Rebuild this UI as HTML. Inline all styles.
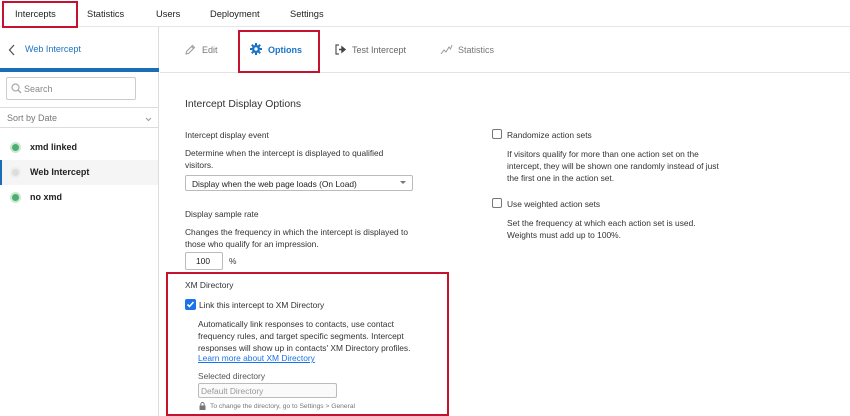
<!DOCTYPE html>
<html><head><meta charset="utf-8"><style>
*{box-sizing:border-box;margin:0;padding:0}
body{width:850px;height:416px;overflow:hidden;font-family:"Liberation Sans",sans-serif;color:#333;background:#fff;position:relative;font-size:8.4px}
.a{position:absolute}
.nav{top:0;left:0;width:850px;height:27px;border-bottom:1px solid #e6e6e6;background:#fff}
.nav span{position:absolute;top:9px;font-size:9.3px;color:#222}
.red{border:2px solid #c4122f}
.side{top:27px;left:0;width:159px;height:389px;border-right:1px solid #ddd}
.t{font-size:8.4px;color:#333}
.chk{width:10px;height:10px;border:1px solid #777;border-radius:2px;background:#fff}
</style></head><body>
<div class="a nav">
<span style="left:15px">Intercepts</span>
<span style="left:87px">Statistics</span>
<span style="left:156px">Users</span>
<span style="left:210px">Deployment</span>
<span style="left:290px">Settings</span>
</div>
<div class="a red" style="left:2px;top:1px;width:76px;height:27px"></div>

<div class="a side">
 <svg class="a" style="left:8px;top:17px" width="8" height="12" viewBox="0 0 8 12"><path d="M6 1L1.5 6L6 11" stroke="#555" stroke-width="1.3" fill="none"/></svg>
 <div class="a" style="left:25px;top:17px;font-size:9px;color:#1a73c7">Web Intercept</div>
 <div class="a" style="left:0;top:41px;width:159px;height:4px;background:#1a6eb5"></div>
 <div class="a" style="left:6px;top:50px;width:130px;height:23px;border:1px solid #ccc;border-radius:2px"></div>
 <svg class="a" style="left:11px;top:56px" width="11" height="11" viewBox="0 0 11 11"><circle cx="4.5" cy="4.5" r="3.5" stroke="#aaa" fill="none" stroke-width="1.2"/><path d="M7 7L10 10" stroke="#aaa" stroke-width="1.4"/></svg>
 <div class="a" style="left:24px;top:57px;font-size:9px;color:#888">Search</div>
 <div class="a" style="left:0;top:80px;width:159px;height:21px;border-top:1px solid #ddd;border-bottom:1px solid #ddd"></div>
 <div class="a" style="left:7px;top:86px;font-size:9px;color:#777">Sort by Date</div>
 <svg class="a" style="left:145px;top:90px" width="7" height="5" viewBox="0 0 7 5"><path d="M1 1L3.5 3.5L6 1" stroke="#999" fill="none"/></svg>
 <div class="a" style="left:12px;top:117px;width:7px;height:7px;border-radius:50%;background:#4caf6e;box-shadow:0 0 0 2px #cbe8d4"></div>
 <div class="a" style="left:30px;top:115px;font-size:9px;font-weight:bold;color:#222">xmd linked</div>
 <div class="a" style="left:0;top:133px;width:158px;height:25px;background:#f5f5f5"></div>
 <div class="a" style="left:0;top:133px;width:2px;height:25px;background:#1a6eb5"></div>
 <div class="a" style="left:12px;top:142px;width:7px;height:7px;border-radius:50%;background:#ddd;box-shadow:0 0 0 2px #eee"></div>
 <div class="a" style="left:30px;top:140px;font-size:9px;font-weight:bold;color:#222">Web Intercept</div>
 <div class="a" style="left:12px;top:167px;width:7px;height:7px;border-radius:50%;background:#4caf6e;box-shadow:0 0 0 2px #cbe8d4"></div>
 <div class="a" style="left:30px;top:165px;font-size:9px;font-weight:bold;color:#222">no xmd</div>
</div>

<div class="a" style="left:160px;top:72px;width:690px;height:1px;background:#e3e3e3"></div>
<svg class="a" style="left:184px;top:44px" width="12" height="12" viewBox="0 0 12 12"><path d="M2 10L2.5 7.5L8.5 1.5L10.5 3.5L4.5 9.5Z M7.5 2.5L9.5 4.5" stroke="#999" fill="none" stroke-width="1"/></svg>
<div class="a" style="left:202px;top:45px;font-size:9px;color:#777">Edit</div>
<svg class="a" style="left:250px;top:43px" width="12" height="12" viewBox="0 0 12 12"><g fill="#1a73c7"><circle cx="6" cy="6" r="4"/><rect x="5" y="0" width="2" height="12"/><rect x="0" y="5" width="12" height="2"/><rect x="5" y="0" width="2" height="12" transform="rotate(45 6 6)"/><rect x="5" y="0" width="2" height="12" transform="rotate(-45 6 6)"/></g><circle cx="6" cy="6" r="1.7" fill="#fff"/></svg>
<div class="a" style="left:268px;top:45px;font-size:9px;font-weight:bold;color:#1a73c7">Options</div>
<div class="a red" style="left:238px;top:30px;width:82px;height:43px"></div>
<svg class="a" style="left:335px;top:44px" width="12" height="11" viewBox="0 0 12 11"><path d="M4 1H1V10H4" stroke="#555" fill="none" stroke-width="1.2"/><path d="M4 5.5H8M7 3L10 5.5L7 8Z" stroke="#444" fill="#444" stroke-width="1.4"/></svg>
<div class="a" style="left:352px;top:45px;font-size:9px;color:#666">Test Intercept</div>
<svg class="a" style="left:440px;top:44px" width="13" height="11" viewBox="0 0 13 11"><path d="M1 10L4 6L6 8L9 3L10.5 5L12 1" stroke="#999" fill="none"/></svg>
<div class="a" style="left:458px;top:45px;font-size:9px;color:#777">Statistics</div>

<div class="a" style="left:185px;top:99px;font-size:10.4px;color:#333">Intercept Display Options</div>
<div class="a t" style="left:185px;top:130px">Intercept display event</div>
<div class="a t" style="left:185px;top:147px;line-height:12px">Determine when the intercept is displayed to qualified<br>visitors.</div>
<div class="a" style="left:185px;top:175px;width:228px;height:16px;border:1px solid #bbb;border-radius:2px"></div>
<div class="a t" style="left:192px;top:179px;color:#222">Display when the web page loads (On Load)</div>
<svg class="a" style="left:400px;top:181px" width="6" height="4" viewBox="0 0 6 4"><path d="M0 0H6L3 3Z" fill="#777"/></svg>
<div class="a t" style="left:185px;top:209px">Display sample rate</div>
<div class="a t" style="left:185px;top:226px;line-height:12px">Changes the frequency in which the intercept is displayed to<br>those who qualify for an impression.</div>
<div class="a" style="left:185px;top:252px;width:38px;height:18px;border:1px solid #bbb;border-radius:2px"></div>
<div class="a t" style="left:196px;top:256px;color:#222">100</div>
<div class="a t" style="left:229px;top:256px">%</div>

<div class="a red" style="left:166px;top:272px;width:283px;height:144px"></div>
<div class="a t" style="left:185px;top:280px">XM Directory</div>
<div class="a" style="left:185px;top:299px;width:11px;height:11px;border-radius:2px;background:#1a73e8"></div>
<svg class="a" style="left:186px;top:300px" width="9" height="9" viewBox="0 0 9 9"><path d="M1.5 4.5L3.5 6.5L7.5 2" stroke="#fff" stroke-width="1.6" fill="none"/></svg>
<div class="a t" style="left:199px;top:300px">Link this intercept to XM Directory</div>
<div class="a t" style="left:198px;top:318px;line-height:12px">Automatically link responses to contacts, use contact<br>frequency rules, and target specific segments. Intercept<br>responses will show up in contacts' XM Directory profiles.</div>
<div class="a t" style="left:198px;top:353px;color:#1a73e8;text-decoration:underline">Learn more about XM Directory</div>
<div class="a t" style="left:198px;top:371px;color:#555">Selected directory</div>
<div class="a" style="left:198px;top:383px;width:139px;height:15px;border:1px solid #bbb;border-radius:2px;background:#fafafa"></div>
<div class="a t" style="left:201px;top:386px;color:#999">Default Directory</div>
<svg class="a" style="left:199px;top:402px" width="7" height="8" viewBox="0 0 7 8"><rect x="0.5" y="3.5" width="6" height="4.5" fill="#777"/><path d="M1.8 3.5V2.2A1.7 1.7 0 0 1 5.2 2.2V3.5" stroke="#777" fill="none"/></svg>
<div class="a" style="left:210px;top:403px;font-size:6.7px;color:#777">To change the directory, go to Settings &gt; General</div>

<div class="a chk" style="left:492px;top:129px"></div>
<div class="a t" style="left:507px;top:130px">Randomize action sets</div>
<div class="a t" style="left:507px;top:148px;line-height:12px">If visitors qualify for more than one action set on the<br>intercept, they will be shown one randomly instead of just<br>the first one in the action set.</div>
<div class="a chk" style="left:492px;top:198px"></div>
<div class="a t" style="left:507px;top:199px">Use weighted action sets</div>
<div class="a t" style="left:507px;top:217px;line-height:12px">Set the frequency at which each action set is used.<br>Weights must add up to 100%.</div>
</body></html>
